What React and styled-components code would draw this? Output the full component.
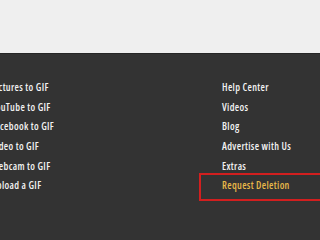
import React from "react"
import styled, { createGlobalStyle } from "styled-components"

const GlobalStyle = createGlobalStyle`
	html, body {
		margin: 0;
		padding: 0;
		background: #333333;
		overflow: hidden;
	}
	body {
		font-family: "Open Sans", "Liberation Sans", sans-serif;
	}
`

const Page = styled.div`
	width: 320px;
	height: 214px;
	display: flex;
	flex-direction: column;
	overflow: hidden;
`

const TopArea = styled.div`
	height: 53px;
	flex: none;
	background: #efefef;
`

const Footer = styled.footer`
	flex: 1;
	background: #333333;
	border-top: 1px solid #262626;
	padding-top: 24px;
	display: grid;
	grid-template-columns: 231px 1fr;
	margin-left: -9px;
`

const LinkList = styled.ul`
	list-style: none;
	margin: 0;
	padding: 0;
	display: flex;
	flex-direction: column;
`

const LinkItem = styled.li`
	position: relative;
	height: 19.7px;
	line-height: 19.7px;
	font-size: 10px;
	font-weight: 600;
	font-stretch: 87.5%;
	letter-spacing: 0.35px;
	color: ${props => (props.highlight ? "#e9b949" : "#f2f2f2")};
	white-space: nowrap;
`

const Marker = styled.span`
	position: absolute;
	left: -23px;
	top: -3px;
	width: 140px;
	height: 24px;
	border: 2px solid #d21f1f;
`

const leftLinks = [
	"Pictures to GIF",
	"YouTube to GIF",
	"Facebook to GIF",
	"Video to GIF",
	"Webcam to GIF",
	"Upload a GIF"
]

const rightLinks = ["Help Center", "Videos", "Blog", "Advertise with Us", "Extras"]

const App = () => {
	return (
		<Page>
			<GlobalStyle />
			<TopArea />
			<Footer>
				<LinkList>
					{leftLinks.map(link => (
						<LinkItem key={link}>{link}</LinkItem>
					))}
				</LinkList>
				<LinkList>
					{rightLinks.map(link => (
						<LinkItem key={link}>{link}</LinkItem>
					))}
					<LinkItem highlight>
						Request Deletion
						<Marker />
					</LinkItem>
				</LinkList>
			</Footer>
		</Page>
	)
}

export default App
